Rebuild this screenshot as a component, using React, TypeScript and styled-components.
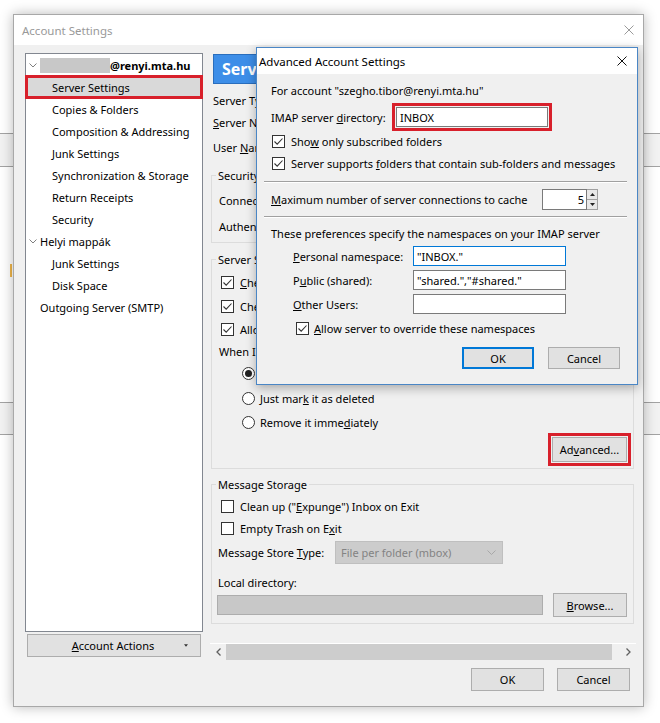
import React from 'react'
import styled, { createGlobalStyle } from 'styled-components'

const RED = '#d8202b'

const GlobalStyle = createGlobalStyle`
  html, body { margin: 0; padding: 0; background: #fff; }
  body {
    font-family: "Noto Sans", "Open Sans", sans-serif;
    font-size: 11px;
    color: #000;
  }
  * { box-sizing: border-box; }
`

// the desktop behind the window: two grey toolbars of the app underneath, and a small orange mark
const Desktop = styled.div`
  position: relative;
  width: 660px;
  height: 723px;
  overflow: hidden;
  padding: 14px 0 0 13px;
  background:
    linear-gradient(#efb54a, #efb54a) 10px 264px / 2px 13px no-repeat,
    linear-gradient(to bottom,
      #fff 0 133px, #a3a3a3 133px 134px, #f2f2f2 134px 166px, #a3a3a3 166px 167px,
      #fff 167px 402px, #a3a3a3 402px 403px, #f2f2f2 403px 434px, #a3a3a3 434px 435px, #fff 435px);
`

const Window = styled.div`
  width: 631px;
  height: 693px;
  border: 1px solid #a8a8a8;
  background: #f0f0f0;
  box-shadow: 0 0 12px rgba(0, 0, 0, 0.28);
  display: flex;
  flex-direction: column;
`

const TitleBar = styled.div<{ $active?: boolean; $h: number }>`
  height: ${p => p.$h}px;
  flex: none;
  background: #fff;
  display: flex;
  align-items: center;
  justify-content: space-between;
  padding: ${p => (p.$active ? '0 10px 0 2px' : '0 9px 0 8px')};
  color: ${p => (p.$active ? '#000' : '#999')};
  font-size: 11.5px;
`

const Body = styled.div`
  flex: 1;
  display: flex;
  flex-direction: column;
  padding: 8px 7px 0 11px;
`

const Main = styled.div`
  display: flex;
  height: 607px;
  gap: 7px;
`

const LeftCol = styled.div`
  width: 178px;
  flex: none;
  display: flex;
  flex-direction: column;
`

const Tree = styled.div`
  height: 579px;
  background: #fff;
  border: 1px solid #828790;
`

const TreeRow = styled.div<{ $indent: number; $selected?: boolean }>`
  height: 22px;
  display: flex;
  align-items: center;
  gap: 3px;
  padding-left: ${p => p.$indent}px;
  white-space: nowrap;
  ${p => p.$selected && `background: #d9d9d9; outline: 3px solid ${RED}; outline-offset: -2px;`}
`

const Blurred = styled.span`
  width: 70px;
  height: 15px;
  background: #c8c8c8;
`

const Bold = styled.span`
  font-weight: bold;
  margin-left: -3px;
`

const Key = styled.span`
  text-decoration: underline;
  text-underline-offset: 1px;
`

const Phrase = styled.span<{ $w?: number }>`
  flex: none;
  white-space: pre;
  ${p => p.$w && `display: inline-block; width: ${p.$w}px;`}
`

// label with an underlined access key, kept as sibling spans
const Hot = ({ b = '', k, a = '', w }: { b?: string; k: string; a?: string; w?: number }) => (
  <Phrase $w={w}>
    {b && <span>{b}</span>}
    <Key>{k}</Key>
    {a && <span>{a}</span>}
  </Phrase>
)

const Button = styled.div<{ $w: number; $h?: number; $default?: boolean }>`
  width: ${p => p.$w}px;
  height: ${p => p.$h ?? 23}px;
  flex: none;
  background: #e1e1e1;
  border: ${p => (p.$default ? '2px solid #0078d7' : '1px solid #adadad')};
  display: flex;
  align-items: center;
  justify-content: center;
`

const MenuButton = styled(Button)`
  margin: 2px 0 0 2px;
  justify-content: flex-start;
  & > span:first-child { flex: 1; text-align: center; padding-left: 14px; }
  & > svg { margin: 0 12px 0 0; }
`

const RightCol = styled.div`
  flex: 1;
  display: flex;
  flex-direction: column;
`

const Header = styled.div`
  height: 30px;
  margin: 1px 3px 0 3px;
  background: #3d8ee8;
  border: 1px solid #2a6ebd;
  color: #fff;
  font-size: 16px;
  font-weight: bold;
  display: flex;
  align-items: center;
  padding-left: 8px;
`

const Row = styled.div<{ $h: number; $pl?: number; $mt?: number; $gap?: number; $end?: boolean }>`
  height: ${p => p.$h}px;
  flex: none;
  margin-top: ${p => p.$mt ?? 0}px;
  padding-left: ${p => p.$pl ?? 0}px;
  display: flex;
  align-items: center;
  gap: ${p => p.$gap ?? 6}px;
  white-space: nowrap;
  ${p => p.$end && 'justify-content: flex-end;'}
`

const Label = styled.span<{ $w?: number }>`
  flex: none;
  ${p => p.$w && `width: ${p.$w}px;`}
`

const Info = styled.div`
  margin-top: 6px;
  padding-left: 3px;
  display: flex;
  flex-direction: column;
`

const Group = styled.fieldset<{ $mt: number; $pt: number; $pb: number; $pl?: number }>`
  margin: ${p => p.$mt}px 2px 0 1px;
  padding: ${p => p.$pt}px 2px ${p => p.$pb}px ${p => p.$pl ?? 7}px;
  border: 1px solid #dcdcdc;
  min-width: 0;
  display: flex;
  flex-direction: column;
`

const Legend = styled.legend<{ $ml?: number }>`
  padding: 0 2px;
  margin-left: ${p => p.$ml ?? -3}px;
  line-height: 15px;
`

const TextField = styled.div<{ $w: number; $h?: number; $focus?: boolean; $right?: boolean }>`
  width: ${p => p.$w}px;
  height: ${p => p.$h ?? 20}px;
  flex: none;
  background: #fff;
  border: 1px solid ${p => (p.$focus ? '#0078d7' : '#7a7a7a')};
  display: flex;
  align-items: center;
  padding: ${p => (p.$right ? '0 2px 0 3px' : '0 3px')};
  ${p => p.$right && 'justify-content: flex-end;'}
`

const Select = styled.div<{ $w: number; $h?: number; $disabled?: boolean }>`
  width: ${p => p.$w}px;
  height: ${p => p.$h ?? 23}px;
  flex: none;
  background: ${p => (p.$disabled ? '#cccccc' : '#e5e5e5')};
  border: 1px solid ${p => (p.$disabled ? '#bfbfbf' : '#acacac')};
  color: ${p => (p.$disabled ? '#838383' : '#000')};
  display: flex;
  align-items: center;
  justify-content: space-between;
  padding: 0 6px 0 5px;
`

const PathField = styled.div`
  width: 326px;
  height: 20px;
  margin-left: -1px;
  background: #c8c8c8;
  border: 1px solid #adadad;
`

const Box = styled.span`
  width: 13px;
  height: 13px;
  flex: none;
  border: 1px solid #333;
  background: #fff;
  display: inline-flex;
  align-items: center;
  justify-content: center;
`

const Radio = styled.span<{ $on?: boolean }>`
  width: 13px;
  height: 13px;
  flex: none;
  border-radius: 50%;
  border: 1px solid #333;
  background: #fff;
  display: inline-flex;
  align-items: center;
  justify-content: center;
  &::after {
    content: '';
    width: 7px;
    height: 7px;
    border-radius: 50%;
    background: #222;
    display: ${p => (p.$on ? 'block' : 'none')};
  }
`

const RedFrame = styled.div`
  border: 3px solid ${RED};
  padding: 1px;
  flex: none;
`

const HScroll = styled.div`
  height: 17px;
  margin-top: auto;
  border-top: 1px solid #fff;
  display: flex;
`

const ScrollBtn = styled.div`
  width: 16px;
  display: flex;
  align-items: center;
  justify-content: center;
`

const Thumb = styled.div`
  flex: 1;
  background: #cdcdcd;
  margin-right: 8px;
`

const Footer = styled.div`
  display: flex;
  justify-content: flex-end;
  gap: 13px;
  padding: 8px 6px 0 0;
`

const Dialog = styled.div`
  position: absolute;
  left: 256px;
  top: 47px;
  width: 382px;
  height: 338px;
  border: 1px solid #4a86c5;
  background: #f0f0f0;
  box-shadow: 0 3px 10px rgba(0, 0, 0, 0.3);
  display: flex;
  flex-direction: column;
`

const DialogBody = styled.div`
  padding: 0 10px 0 14px;
  display: flex;
  flex-direction: column;
`

const Separator = styled.div<{ $mt: number }>`
  margin: ${p => p.$mt}px 0 0 -7px;
  height: 2px;
  border-top: 1px solid #a0a0a0;
  border-bottom: 1px solid #fff;
`

const NsGrid = styled.div`
  margin-top: 4px;
  padding-left: 22px;
  display: grid;
  grid-template-columns: 120px 153px;
  grid-auto-rows: 20px;
  row-gap: 4px;
  align-items: center;
`

const DialogButtons = styled(Row)`
  margin-right: 7px;
`

const Spinner = styled.div`
  width: 11px;
  height: 21px;
  border: 1px solid #a0a0a0;
  border-left: none;
  background: #f0f0f0;
  display: flex;
  flex-direction: column;
  & > span {
    flex: 1;
    display: flex;
    align-items: center;
    justify-content: center;
    background: #e8e8e8;
  }
  & > span + span { border-top: 1px solid #a0a0a0; }
`

const Close = ({ color }: { color: string }) => (
  <svg width="10" height="10" viewBox="0 0 10 10">
    <path d="M0.5 0.5 L9.5 9.5 M9.5 0.5 L0.5 9.5" stroke={color} strokeWidth="1" fill="none" />
  </svg>
)

const Chevron = () => (
  <svg width="8" height="5" viewBox="0 0 8 5">
    <path d="M0.5 0.5 L4 4 L7.5 0.5" stroke="#7f7f7f" strokeWidth="1" fill="none" />
  </svg>
)

const DownArrow = ({ color = '#333', w = 5 }: { color?: string; w?: number }) => (
  <svg width={w} height="3" viewBox="0 0 5 3">
    <path d="M0 0 H5 L2.5 3 Z" fill={color} />
  </svg>
)

const SelectChevron = ({ color }: { color: string }) => (
  <svg width="9" height="5" viewBox="0 0 9 5">
    <path d="M0.5 0.5 L4.5 4.5 L8.5 0.5" stroke={color} strokeWidth="1" fill="none" />
  </svg>
)

const Check = () => (
  <svg width="11" height="11" viewBox="0 0 11 11">
    <path d="M1.5 5.5 L4.2 8.2 L9.5 2.5" fill="none" stroke="#333" strokeWidth="1.1" />
  </svg>
)

const CheckBox = ({ on }: { on?: boolean }) => <Box>{on && <Check />}</Box>

const ScrollArrow = ({ dir }: { dir: 'left' | 'right' }) => (
  <svg width="5" height="8" viewBox="0 0 5 8">
    <path d={dir === 'left' ? 'M4.5 0.5 L1 4 L4.5 7.5' : 'M0.5 0.5 L4 4 L0.5 7.5'} stroke="#606060" strokeWidth="1.3" fill="none" />
  </svg>
)

const Tri = ({ up }: { up?: boolean }) => (
  <svg width="5" height="3" viewBox="0 0 5 3">
    <path d={up ? 'M0 3 H5 L2.5 0 Z' : 'M0 0 H5 L2.5 3 Z'} fill="#222" />
  </svg>
)

type TreeItem = { label: string; indent: number; parent?: boolean; selected?: boolean; account?: boolean }

const treeItems: TreeItem[] = [
  { label: '@renyi.mta.hu', indent: 3, parent: true, account: true },
  { label: 'Server Settings', indent: 26, selected: true },
  { label: 'Copies & Folders', indent: 26 },
  { label: 'Composition & Addressing', indent: 26 },
  { label: 'Junk Settings', indent: 26 },
  { label: 'Synchronization & Storage', indent: 26 },
  { label: 'Return Receipts', indent: 26 },
  { label: 'Security', indent: 26 },
  { label: 'Helyi mappák', indent: 3, parent: true },
  { label: 'Junk Settings', indent: 26 },
  { label: 'Disk Space', indent: 26 },
  { label: 'Outgoing Server (SMTP)', indent: 14 },
]

const AdvancedDialog = () => (
  <Dialog>
    <TitleBar $active $h={26}>
      <span>Advanced Account Settings</span>
      <Close color="#111" />
    </TitleBar>
    <DialogBody>
      <Row $h={20} $mt={6}>For account "szegho.tibor@renyi.mta.hu"</Row>
      <Row $h={28} $mt={3} $gap={0}>
        <Hot w={121} b="IMAP server " k="d" a="irectory:" />
        <RedFrame>
          <TextField $w={152} $h={20}>INBOX</TextField>
        </RedFrame>
      </Row>
      <Row $h={20} $pl={1}>
        <CheckBox on />
        <Hot b="Sho" k="w" a=" only subscribed folders" />
      </Row>
      <Row $h={24} $pl={1}>
        <CheckBox on />
        <Hot b="Server supports " k="f" a="olders that contain sub-folders and messages" />
      </Row>
      <Separator $mt={6} />
      <Row $h={21} $mt={6} $gap={0}>
        <Hot w={271} k="M" a="aximum number of server connections to cache" />
        <TextField $w={45} $h={21} $right>5</TextField>
        <Spinner>
          <span><Tri up /></span>
          <span><Tri /></span>
        </Spinner>
      </Row>
      <Separator $mt={6} />
      <Row $h={18} $mt={6}>These preferences specify the namespaces on your IMAP server</Row>
      <NsGrid>
        <Hot k="P" a="ersonal namespace:" />
        <TextField $w={153} $focus>"INBOX."</TextField>
        <Hot b="P" k="u" a="blic (shared):" />
        <TextField $w={153}>"shared.","#shared."</TextField>
        <Hot k="O" a="ther Users:" />
        <TextField $w={153} />
      </NsGrid>
      <Row $h={20} $mt={4} $pl={25} $gap={5}>
        <CheckBox on />
        <Hot k="A" a="llow server to override these namespaces" />
      </Row>
      <DialogButtons $h={22} $mt={9} $gap={14} $end>
        <Button $w={72} $h={22} $default>OK</Button>
        <Button $w={72} $h={22}>Cancel</Button>
      </DialogButtons>
    </DialogBody>
  </Dialog>
)

const App: React.FC = () => {
  return (
    <Desktop>
      <GlobalStyle />
      <Window>
        <TitleBar $h={30}>
          <span>Account Settings</span>
          <Close color="#9a9a9a" />
        </TitleBar>
        <Body>
          <Main>
            <LeftCol>
              <Tree>
                {treeItems.map((item, i) => (
                  <TreeRow key={i} $indent={item.indent} $selected={item.selected}>
                    {item.parent && <Chevron />}
                    {item.account && <Blurred />}
                    {item.account ? <Bold>{item.label}</Bold> : <span>{item.label}</span>}
                  </TreeRow>
                ))}
              </Tree>
              <MenuButton $w={174}>
                <Hot k="A" a="ccount Actions" />
                <DownArrow w={4} />
              </MenuButton>
            </LeftCol>

            <RightCol>
              <Header>Server Settings</Header>
              <Info>
                <Row $h={20}>
                  <Label $w={90}>Server Type:</Label>
                  <span>IMAP Mail Server</span>
                </Row>
                <Row $h={24}>
                  <Hot w={90} k="S" a="erver Name:" />
                  <TextField $w={180}>imap.renyi.mta.hu</TextField>
                  <span>Port:</span>
                  <TextField $w={50}>993</TextField>
                </Row>
                <Row $h={26}>
                  <Hot w={90} b="User " k="N" a="ame:" />
                  <TextField $w={250}>szegho.tibor</TextField>
                </Row>
              </Info>

              <Group $mt={8} $pt={4} $pb={2}>
                <Legend>Security Settings</Legend>
                <Row $h={26}>
                  <Label $w={140}>Connection security:</Label>
                  <Select $w={200}><span>SSL/TLS</span><SelectChevron color="#333" /></Select>
                </Row>
                <Row $h={27}>
                  <Label $w={140}>Authentication method:</Label>
                  <Select $w={200}><span>Normal password</span><SelectChevron color="#333" /></Select>
                </Row>
              </Group>

              <Group $mt={9} $pt={3} $pb={2}>
                <Legend>Server Settings</Legend>
                <Row $h={24} $pl={2}>
                  <CheckBox on />
                  <Hot k="C" a="heck for new messages at startup" />
                </Row>
                <Row $h={24} $pl={2}>
                  <CheckBox on />
                  <Hot b="Check for new messages ever" k="y" />
                  <TextField $w={40}>10</TextField>
                  <span>minutes</span>
                </Row>
                <Row $h={23} $pl={2}>
                  <CheckBox on />
                  <span>Allow immediate server notifications</span>
                </Row>
                <Row $h={20}>When I delete a message:</Row>
                <Row $h={24} $pl={23} $gap={5}>
                  <Radio $on />
                  <Label $w={125}>Move it to this folder:</Label>
                  <Select $w={235} $h={21}><span>Trash on szegho.tibor</span><SelectChevron color="#333" /></Select>
                </Row>
                <Row $h={26} $pl={23} $gap={5}>
                  <Radio />
                  <Hot b="Just mar" k="k" a=" it as deleted" />
                </Row>
                <Row $h={22} $pl={23} $gap={5}>
                  <Radio />
                  <Hot b="Remove it imme" k="d" a="iately" />
                </Row>
                <Row $h={33} $end>
                  <RedFrame>
                    <Button $w={75} $h={25}><Hot b="Ad" k="v" a="anced..." /></Button>
                  </RedFrame>
                </Row>
              </Group>

              <Group $mt={8} $pt={3} $pb={6} $pl={6}>
                <Legend $ml={-2}>Message Storage</Legend>
                <Row $h={22} $pl={3}>
                  <CheckBox />
                  <Hot b={'Clean up ("'} k="E" a={'xpunge") Inbox on Exit'} />
                </Row>
                <Row $h={23} $pl={3}>
                  <CheckBox />
                  <Hot b="Empty Trash on E" k="x" a="it" />
                </Row>
                <Row $h={25} $gap={0}>
                  <Hot w={117} b="Message Store " k="T" a="ype:" />
                  <Select $w={168} $disabled>
                    <span>File per folder (mbox)</span>
                    <SelectChevron color="#a8a8a8" />
                  </Select>
                </Row>
                <Row $h={18} $mt={8}>Local directory:</Row>
                <Row $h={24} $mt={2} $gap={10}>
                  <PathField />
                  <Button $w={74} $h={24}><Hot k="B" a="rowse..." /></Button>
                </Row>
              </Group>

              <HScroll>
                <ScrollBtn><ScrollArrow dir="left" /></ScrollBtn>
                <Thumb />
                <ScrollBtn><ScrollArrow dir="right" /></ScrollBtn>
              </HScroll>
            </RightCol>
          </Main>
          <Footer>
            <Button $w={73}>OK</Button>
            <Button $w={73}>Cancel</Button>
          </Footer>
        </Body>
      </Window>
      <AdvancedDialog />
    </Desktop>
  )
}

export default App
